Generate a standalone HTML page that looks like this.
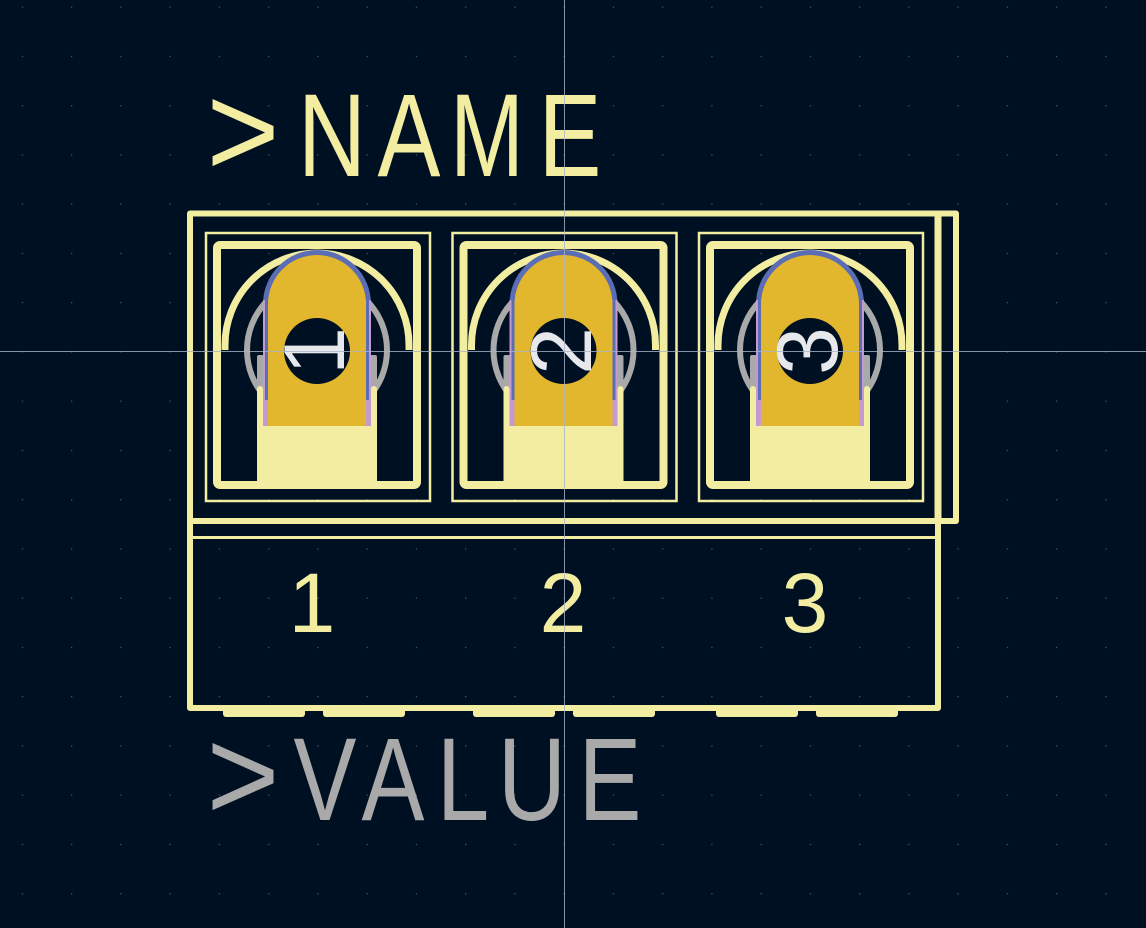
<!DOCTYPE html>
<html><head><meta charset="utf-8"><style>
html,body{margin:0;padding:0;background:#001023;}
svg{display:block}
text{font-family:"Liberation Sans",sans-serif;}
</style></head><body>
<svg width="1146" height="928" viewBox="0 0 1146 928" xmlns="http://www.w3.org/2000/svg">
<defs>
<pattern id="g" x="21.8" y="6.6" width="49.25" height="49.25" patternUnits="userSpaceOnUse">
<rect x="0" y="0" width="1.2" height="1.2" fill="#4d5a6e"/>
</pattern>
<g id="cell">
  <rect x="-111" y="233" width="224" height="268" fill="none" stroke="#f2eda1" stroke-width="2.5"/>
  <rect x="-100" y="245" width="200" height="240" rx="3" fill="none" stroke="#f2eda1" stroke-width="8"/>
  <path d="M -92 350 L -92 345 A 92 92 0 0 1 92 345 L 92 350" fill="none" stroke="#f2eda1" stroke-width="7"/>
  <circle cx="0" cy="350" r="70" fill="none" stroke="#a9a9a9" stroke-width="6"/>
  <rect x="-60" y="355" width="7" height="35" rx="2" fill="#a9a9a9"/>
  <rect x="53" y="355" width="7" height="35" rx="2" fill="#a9a9a9"/>
  <path d="M -54 426 L -54 304 A 54 54 0 0 1 54 304 L 54 426 Z" fill="#5b6db5"/>
  <rect x="-54" y="300" width="108" height="126" fill="#c49ad0"/>
  <rect x="-52" y="300" width="3" height="100" fill="#5b6db5"/>
  <rect x="49" y="300" width="3" height="100" fill="#5b6db5"/>
  <path d="M -49 426 L -49 304 A 49 49 0 0 1 49 304 L 49 426 Z" fill="#e2b62d"/>
  <circle cx="0" cy="351" r="33" fill="#001023"/>
  <rect x="-60" y="426" width="120" height="58" fill="#f2eda1"/>
  <rect x="-60" y="386" width="6" height="50" rx="3" fill="#f2eda1"/>
  <rect x="54" y="386" width="6" height="50" rx="3" fill="#f2eda1"/>
</g>
</defs>
<rect width="1146" height="928" fill="#001023"/>
<rect width="1146" height="928" fill="url(#g)"/>

<use href="#cell" transform="translate(317,0)"/>
<use href="#cell" transform="translate(563.5,0)"/>
<use href="#cell" transform="translate(810,0)"/>

<g fill="#e6e8ec" font-size="86" text-anchor="middle">
<text transform="translate(313,351) rotate(-90)" y="31">1</text>
<text transform="translate(560,351) rotate(-90)" y="31">2</text>
<text transform="translate(806,351) rotate(-90)" y="31">3</text>
</g>

<g fill="none" stroke="#f2eda1" stroke-linejoin="round" stroke-linecap="round">
<path d="M 190 521 L 190 213.5 L 956 213.5 L 956 521 Z" stroke-width="6"/>
<line x1="938" y1="214" x2="938" y2="521" stroke-width="7"/>
<path d="M 190 521 L 190 708 L 938 708 L 938 521" stroke-width="6"/>
<line x1="190" y1="537.5" x2="938" y2="537.5" stroke-width="3"/>
</g>
<g fill="#f2eda1">
<rect x="223" y="708" width="82" height="9" rx="3"/>
<rect x="323" y="708" width="82" height="9" rx="3"/>
<rect x="473" y="708" width="82" height="9" rx="3"/>
<rect x="573" y="708" width="82" height="9" rx="3"/>
<rect x="716" y="708" width="82" height="9" rx="3"/>
<rect x="816" y="708" width="82" height="9" rx="3"/>
</g>

<g fill="#f2eda1" font-size="84" text-anchor="middle">
<text x="312" y="632">1</text>
<text x="563" y="632">2</text>
<text x="805" y="632">3</text>
</g>

<g fill="#f2eda1" font-size="118" text-anchor="middle">
<text transform="translate(243,176) scale(0.95,1)" font-size="132">&gt;</text>
<text transform="translate(332,176) scale(0.8,1)">N</text>
<text transform="translate(409,176) scale(0.8,1)">A</text>
<text transform="translate(487,176) scale(0.75,1)">M</text>
<text transform="translate(570,176) scale(0.8,1)">E</text>
</g>
<g fill="#a9a9a9" font-size="118" text-anchor="middle">
<text transform="translate(243,820) scale(0.95,1)" font-size="132">&gt;</text>
<text transform="translate(325,820) scale(0.8,1)">V</text>
<text transform="translate(393,820) scale(0.8,1)">A</text>
<text transform="translate(463,820) scale(0.8,1)">L</text>
<text transform="translate(532,820) scale(0.8,1)">U</text>
<text transform="translate(610,820) scale(0.8,1)">E</text>
</g>

<line x1="564.5" y1="0" x2="564.5" y2="928" stroke="#a8b4c8" stroke-width="1" opacity="0.8"/>
<line x1="0" y1="351.5" x2="1146" y2="351.5" stroke="#a8b4c8" stroke-width="1" opacity="0.8"/>
</svg>
</body></html>
